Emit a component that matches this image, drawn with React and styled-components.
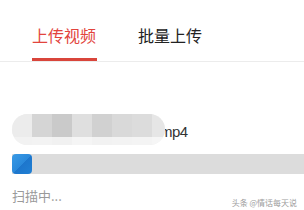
import React from "react";
import styled, { createGlobalStyle } from "styled-components";

const Global = createGlobalStyle`
  html, body { margin: 0; padding: 0; background: #fff; }
  body { font-family: "Noto Sans CJK SC", "Noto Sans", sans-serif; }
`;

const Page = styled.div`
  position: relative;
  width: 304px;
  height: 210px;
  overflow: hidden;
  background: #fff;
`;

const TabBar = styled.div`
  display: flex;
  gap: 41px;
  padding-left: 32px;
  height: 61px;
  border-bottom: 1px solid #ececec;
`;

const Tab = styled.div`
  box-sizing: border-box;
  height: 61px;
  padding-top: 25px;
  font-size: 16px;
  line-height: 20px;
  color: ${(p) => (p.$active ? "#e2443d" : "#222")};
  border-bottom: 3px solid ${(p) => (p.$active ? "#d9453b" : "transparent")};
  width: 65px;
`;

const Content = styled.div`
  padding: 52px 0 0 12px;
`;

const FileRow = styled.div`
  display: flex;
  align-items: center;
  height: 31px;
`;

const Pill = styled.div`
  position: relative;
  z-index: 1;
  width: 153px;
  height: 31px;
  border-radius: 16px;
  overflow: hidden;
  display: grid;
  grid-template-columns: 20px 20px 20px 20px 20px 20px 20px 13px;
  grid-template-rows: 23px 8px;
  background: #f1f1f1;
`;

const Block = styled.div`
  background: ${(p) => p.$c};
`;

const FileExt = styled.span`
  margin-left: -5px;
  padding-top: 4px;
  font-size: 15px;
  line-height: 18px;
  letter-spacing: -0.6px;
  color: #333;
  font-family: "Liberation Sans", Arial, sans-serif;
`;

const Bar = styled.div`
  margin-top: 9px;
  height: 20px;
  background: #dcdcdc;
  display: flex;
`;

const Fill = styled.div`
  width: 20px;
  height: 20px;
  border-radius: 4px;
  background: linear-gradient(135deg, #3a9be6 0%, #2a89db 50%, #1d76cc 51%, #2180d4 100%);
`;

const Status = styled.div`
  margin-top: 13px;
  font-size: 13px;
  line-height: 17px;
  color: #9a9a9a;
`;

const Watermark = styled.div`
  position: absolute;
  right: 7px;
  bottom: 2px;
  font-size: 8px;
  line-height: 10px;
  color: #9c9c9c;
`;

const top = ["#ececec", "#d5d5d5", "#cacaca", "#dfdfdf", "#d1d1d1", "#d9d9d9", "#dcdcdc", "#e6e6e6"];
const bottom = ["#f2f2f2", "#f3f3f3", "#f1f1f1", "#f5f5f5", "#f2f2f2", "#f3f3f3", "#f4f4f4", "#f6f6f6"];

export default function App() {
  return (
    <Page>
      <Global />
      <TabBar>
        <Tab $active>上传视频</Tab>
        <Tab>批量上传</Tab>
      </TabBar>
      <Content>
        <FileRow>
          <Pill>
            {top.map((c, i) => (
              <Block key={"t" + i} $c={c} />
            ))}
            {bottom.map((c, i) => (
              <Block key={"b" + i} $c={c} />
            ))}
          </Pill>
          <FileExt>mp4</FileExt>
        </FileRow>
        <Bar>
          <Fill />
        </Bar>
        <Status>扫描中...</Status>
      </Content>
      <Watermark>头条 @情话每天说</Watermark>
    </Page>
  );
}
